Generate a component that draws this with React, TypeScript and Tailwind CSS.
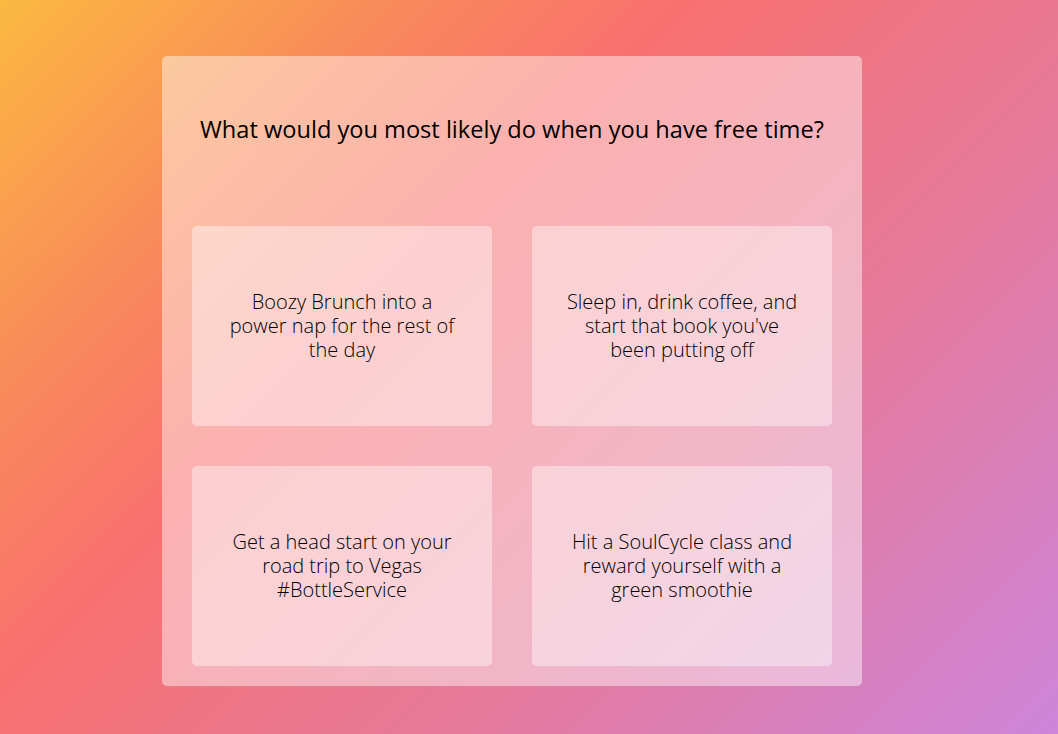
const options = [
  "Boozy Brunch into a power nap for the rest of the day",
  "Sleep in, drink coffee, and start that book you've been putting off",
  "Get a head start on your road trip to Vegas #BottleService",
  "Hit a SoulCycle class and reward yourself with a green smoothie",
];

export default function App() {
  return (
    <div className="min-h-[734px] w-full bg-[linear-gradient(135deg,#fbb940_0%,#f98a5a_22%,#f8716f_38%,#e47a9e_68%,#cd85da_100%)] font-['Open_Sans','Noto_Sans',sans-serif]">
      <div className="w-[1024px] flex justify-center pt-[56px]">
        <div className="w-[700px] rounded-[5px] bg-white/45 px-[30px] pb-[20px]">
          <h1 className="h-[170px] pt-[58px] text-center text-[23.6px] leading-[30px] text-black font-normal">
            What would you most likely do when you have free time?
          </h1>
          <div className="grid grid-cols-2 gap-[40px]">
            {options.map((o) => (
              <button
                key={o}
                className="h-[200px] rounded-[5px] bg-white/40 flex items-center justify-center px-[30px] text-center text-[20px] leading-[24px] font-light text-black"
              >
                {o}
              </button>
            ))}
          </div>
        </div>
      </div>
    </div>
  );
}
